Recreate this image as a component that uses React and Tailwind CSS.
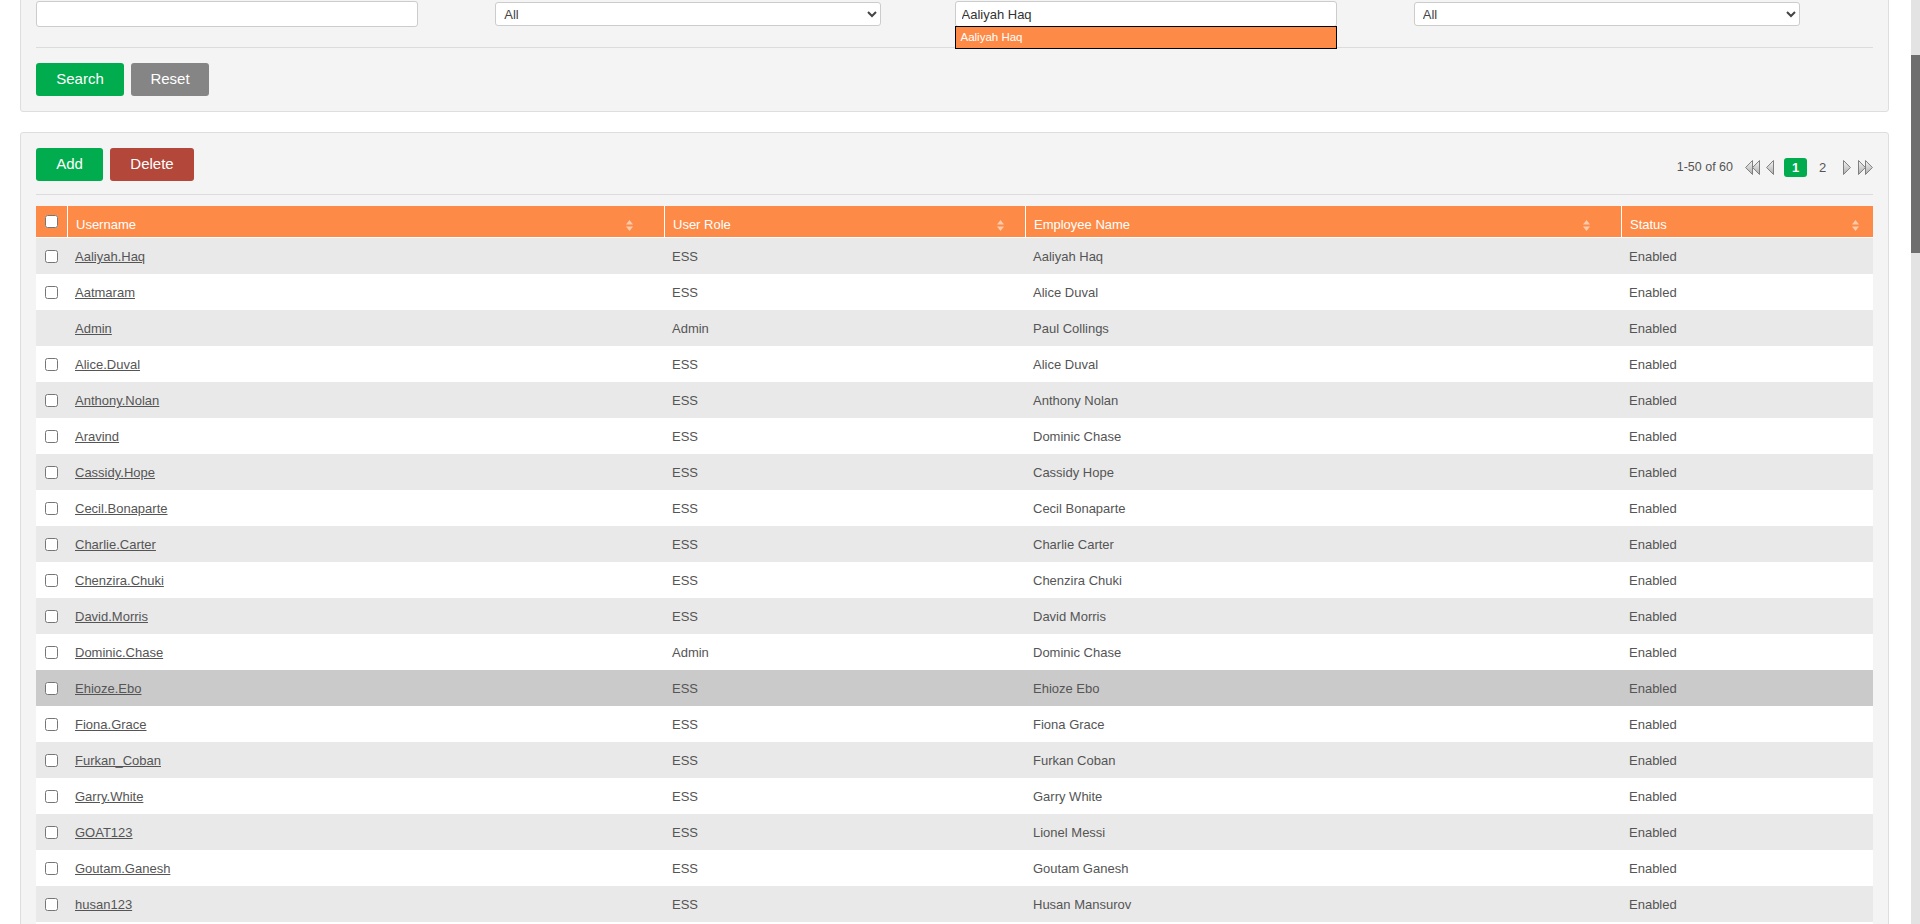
import React, { useEffect, useRef } from "react";

const users = [
  ["Aaliyah.Haq", "ESS", "Aaliyah Haq"],
  ["Aatmaram", "ESS", "Alice Duval"],
  ["Admin", "Admin", "Paul Collings", true],
  ["Alice.Duval", "ESS", "Alice Duval"],
  ["Anthony.Nolan", "ESS", "Anthony Nolan"],
  ["Aravind", "ESS", "Dominic Chase"],
  ["Cassidy.Hope", "ESS", "Cassidy Hope"],
  ["Cecil.Bonaparte", "ESS", "Cecil Bonaparte"],
  ["Charlie.Carter", "ESS", "Charlie Carter"],
  ["Chenzira.Chuki", "ESS", "Chenzira Chuki"],
  ["David.Morris", "ESS", "David Morris"],
  ["Dominic.Chase", "Admin", "Dominic Chase"],
  ["Ehioze.Ebo", "ESS", "Ehioze Ebo"],
  ["Fiona.Grace", "ESS", "Fiona Grace"],
  ["Furkan_Coban", "ESS", "Furkan Coban"],
  ["Garry.White", "ESS", "Garry White"],
  ["GOAT123", "ESS", "Lionel Messi"],
  ["Goutam.Ganesh", "ESS", "Goutam Ganesh"],
  ["husan123", "ESS", "Husan Mansurov"],
  ["Jasmine.Morgan", "ESS", "Jasmine Morgan"],
  ["John.Smith", "ESS", "John Smith"],
];

const HOVER_ROW = 12;

function SortIcon() {
  return (
    <svg width="7" height="11" viewBox="0 0 7 11" className="shrink-0">
      <polygon points="0,4.5 3.5,0 7,4.5" fill="#ffffff" fillOpacity="0.55" />
      <polygon points="0,6.5 7,6.5 3.5,11" fill="#ffffff" fillOpacity="0.55" />
    </svg>
  );
}

function ArrowGrad({ id }) {
  return (
    <defs>
      <linearGradient id={id} x1="0" y1="0" x2="0" y2="1">
        <stop offset="0" stopColor="#f6f6f6" />
        <stop offset="1" stopColor="#adadad" />
      </linearGradient>
    </defs>
  );
}

function SingleArrow({ dir, className }) {
  const id = "pg-single-" + dir;
  const pts = dir === "left" ? "7.5,0.5 7.5,14.5 0.6,7.5" : "0.5,0.5 0.5,14.5 7.4,7.5";
  return (
    <svg width="8" height="15" viewBox="0 0 8 15" className={className}>
      <ArrowGrad id={id} />
      <polygon points={pts} fill={`url(#${id})`} stroke="#7f7f7f" strokeWidth="1" strokeLinejoin="round" />
    </svg>
  );
}

function DoubleArrow({ dir, className }) {
  const id = "pg-double-" + dir;
  const a = dir === "left" ? "7.5,0.5 7.5,14.5 0.6,7.5" : "0.5,0.5 0.5,14.5 7.4,7.5";
  const b = dir === "left" ? "14.5,0.5 14.5,14.5 7.6,7.5" : "7.5,0.5 7.5,14.5 14.4,7.5";
  return (
    <svg width="15" height="15" viewBox="0 0 15 15" className={className}>
      <ArrowGrad id={id} />
      <polygon points={a} fill={`url(#${id})`} stroke="#7f7f7f" strokeWidth="1" strokeLinejoin="round" />
      <polygon points={b} fill={`url(#${id})`} stroke="#7f7f7f" strokeWidth="1" strokeLinejoin="round" />
    </svg>
  );
}

function FilterPanel() {
  const nameRef = useRef(null);

  useEffect(() => {
    const el = nameRef.current;
    if (el) {
      el.focus();
      el.setSelectionRange(el.value.length, el.value.length);
    }
  }, []);

  return (
    <div className="-mt-[15px] ml-[20px] mr-[22px] rounded-[3px] border border-[#dedede] bg-[#f4f4f4] px-[15px] pt-[15px] pb-[15px]">
      <div className="grid grid-cols-4">
        <div>
          <input
            type="text"
            className="h-[26px] w-[382px] rounded-[3px] border border-[#cccccc] bg-white px-[6px] text-[13px] text-[#333] outline-none"
          />
        </div>
        <div>
          <select className="mt-[1px] h-[24px] w-[386px] rounded-[3px] border border-[#cccccc] bg-white px-[4px] text-[13px] text-[#444] outline-none">
            <option>All</option>
          </select>
        </div>
        <div className="relative">
          <input
            ref={nameRef}
            type="text"
            defaultValue="Aaliyah Haq"
            className="h-[26px] w-[382px] rounded-[3px] border border-[#cccccc] bg-white px-[6px] text-[13px] text-[#333] caret-black outline-none"
          />
          <div className="absolute left-0 top-[25px] h-[23px] w-[382px] border border-black bg-[#fd8b47] pl-[5px] text-[11.5px] leading-[21px] text-white">
            Aaliyah Haq
          </div>
        </div>
        <div>
          <select className="mt-[1px] h-[24px] w-[386px] rounded-[3px] border border-[#cccccc] bg-white px-[4px] text-[13px] text-[#444] outline-none">
            <option>All</option>
          </select>
        </div>
      </div>

      <div className="mt-[20px] border-t border-[#dcdcdc]" />

      <div className="mt-[15px] flex gap-[7px]">
        <button className="h-[33px] w-[88px] rounded-[3px] bg-[#00ac4d] text-[15px] text-white">Search</button>
        <button className="h-[33px] w-[78px] rounded-[3px] bg-[#858585] text-[15px] text-white">Reset</button>
      </div>
    </div>
  );
}

function ListPanel() {
  const cols = "grid grid-cols-[31px_597px_361px_596px_1fr]";

  return (
    <div className="ml-[20px] mr-[22px] mt-[20px] rounded-[3px] border border-[#dedede] bg-[#f4f4f4] px-[15px] pt-[15px]">
      {/* Actions + pagination */}
      <div className="flex items-center justify-between">
        <div className="flex gap-[7px]">
          <button className="h-[33px] w-[67px] rounded-[3px] bg-[#00ac4d] text-[15px] text-white">Add</button>
          <button className="h-[33px] w-[84px] rounded-[3px] bg-[#b2473a] text-[15px] text-white">Delete</button>
        </div>
        <div className="flex items-center pt-[6px] text-[12.5px] text-[#555]">
          <span>1-50 of 60</span>
          <DoubleArrow dir="left" className="ml-[12px]" />
          <SingleArrow dir="left" className="ml-[6px]" />
          <span className="ml-[10px] flex h-[19px] w-[23px] items-center justify-center rounded-[3px] bg-[#00ac4d] text-[13px] font-bold text-white">
            1
          </span>
          <span className="ml-[4px] w-[23px] text-center text-[13px]">2</span>
          <SingleArrow dir="right" className="ml-[9px]" />
          <DoubleArrow dir="right" className="ml-[7px]" />
        </div>
      </div>

      <div className="mt-[13px] border-t border-[#dcdcdc]" />

      {/* Table */}
      <div className="mt-[11px]">
        <div className={`${cols} h-[32px] border-b border-white bg-[#fd8b47] text-[13px] text-white`}>
          <div className="flex items-center justify-center">
            <input type="checkbox" className="m-0 h-[13px] w-[13px]" />
          </div>
          <div className="flex items-center justify-between border-l border-white pt-[7px] pl-[8px] pr-[31px]">
            <span>Username</span>
            <SortIcon />
          </div>
          <div className="flex items-center justify-between border-l border-white pt-[7px] pl-[8px] pr-[21px]">
            <span>User Role</span>
            <SortIcon />
          </div>
          <div className="flex items-center justify-between border-l border-white pt-[7px] pl-[8px] pr-[31px]">
            <span>Employee Name</span>
            <SortIcon />
          </div>
          <div className="flex items-center justify-between border-l border-white pt-[7px] pl-[8px] pr-[14px]">
            <span>Status</span>
            <SortIcon />
          </div>
        </div>

        {users.map(([username, role, name, locked], idx) => {
          const bg = idx === HOVER_ROW ? "bg-[#cacaca]" : idx % 2 === 0 ? "bg-[#e9e9e9]" : "bg-white";
          return (
            <div key={username} className={`${cols} h-[36px] items-center text-[13px] text-[#555] ${bg}`}>
              <div className="flex items-center justify-center">
                {!locked && <input type="checkbox" className="m-0 h-[13px] w-[13px]" />}
              </div>
              <div className="pl-[8px] pt-[2px]">
                <a href="#" className="text-[#555] underline">
                  {username}
                </a>
              </div>
              <div className="pl-[8px] pt-[2px]">{role}</div>
              <div className="pl-[8px] pt-[2px]">{name}</div>
              <div className="pl-[8px] pt-[2px]">Enabled</div>
            </div>
          );
        })}
      </div>
    </div>
  );
}

export default function App() {
  return (
    <div className="flex h-[924px] overflow-hidden bg-white font-['Liberation_Sans',Arial,sans-serif] text-[13px] text-[#555]">
      <div className="min-w-0 flex-1">
        <FilterPanel />
        <ListPanel />
      </div>
      {/* page scrollbar */}
      <div className="w-[9px] shrink-0 bg-[#e3e3e3]">
        <div className="mt-[55px] h-[198px] bg-[#6e6e6e]" />
      </div>
    </div>
  );
}
